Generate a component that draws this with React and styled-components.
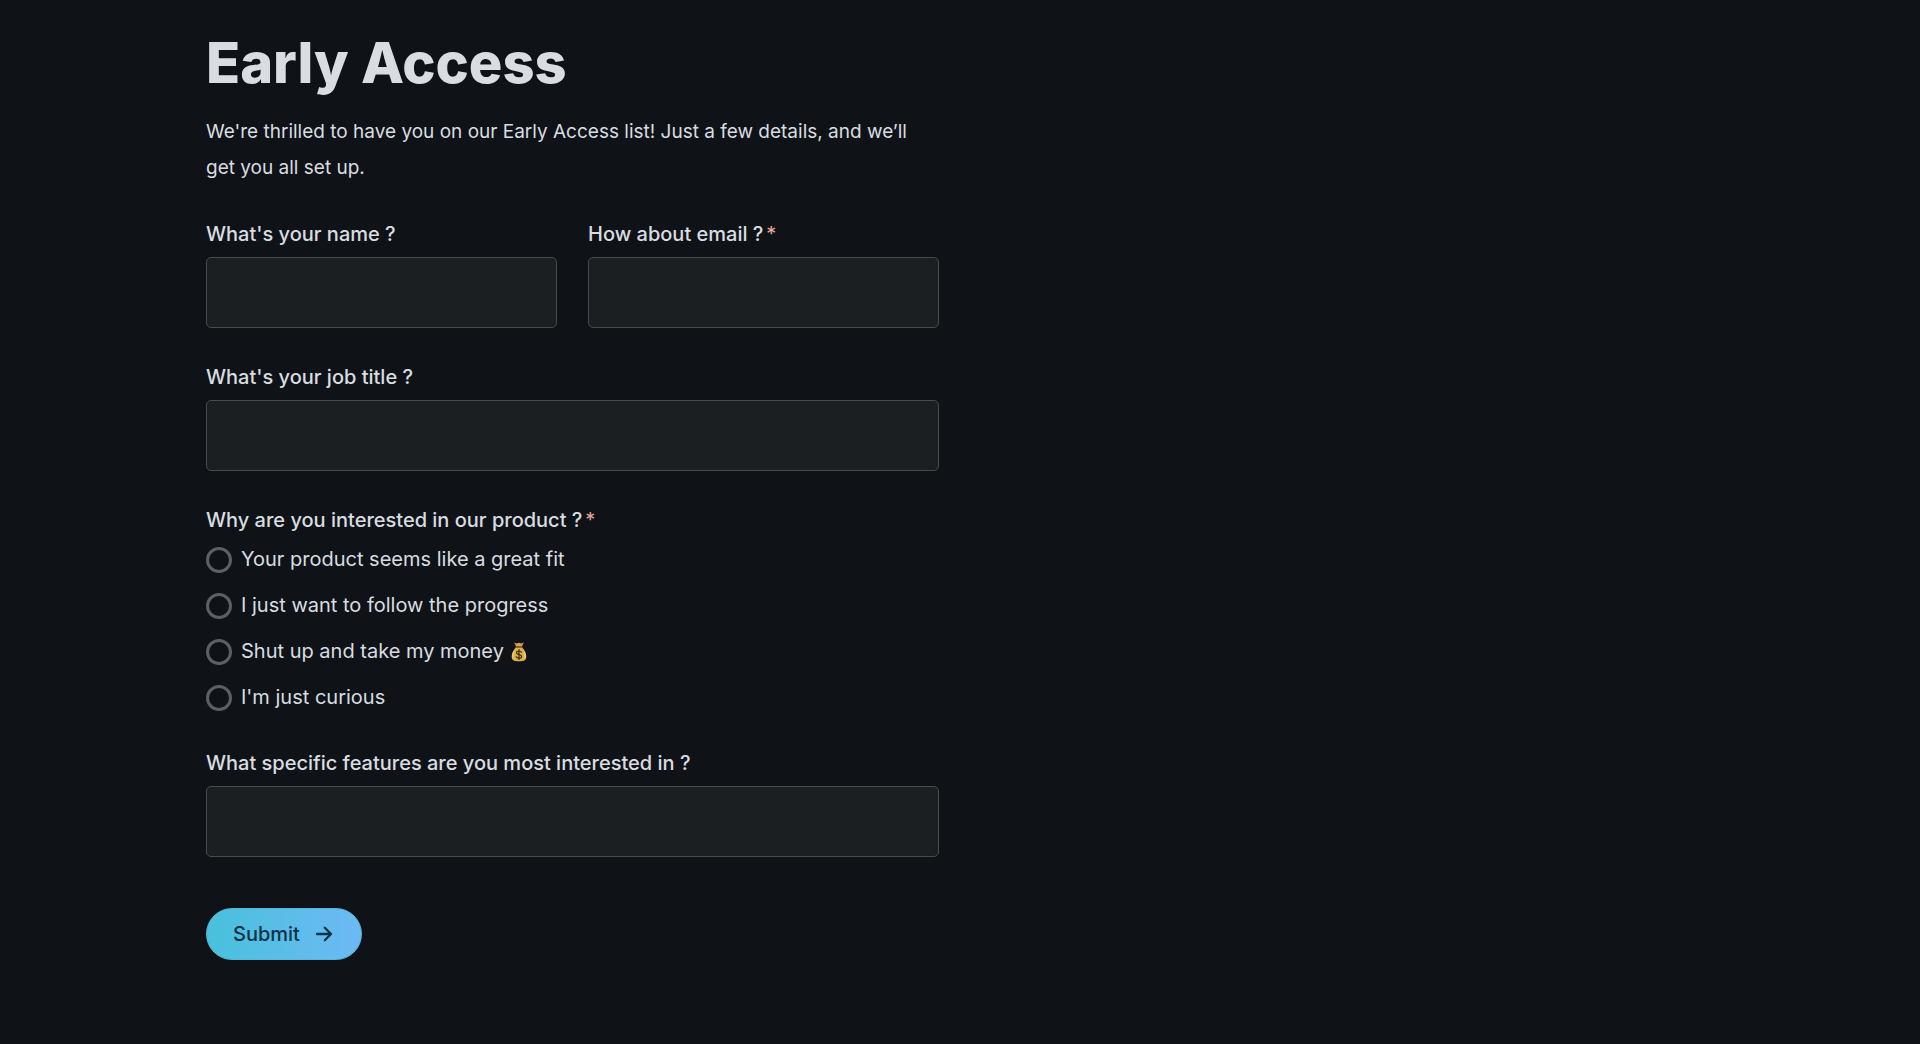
import React, { useState } from 'react'
import styled, { createGlobalStyle } from 'styled-components'

const GlobalStyle = createGlobalStyle`
  * {
    box-sizing: border-box;
  }

  body {
    margin: 0;
    background: #0f1317;
    color: #d9dde1;
    font-family: Inter, "Liberation Sans", sans-serif;
    font-size: 20px;
  }
`

const reasons = [
  { value: 'fit', text: 'Your product seems like a great fit' },
  { value: 'progress', text: 'I just want to follow the progress' },
  { value: 'money', text: 'Shut up and take my money', icon: true },
  { value: 'curious', text: "I'm just curious" },
]

function MoneyBag() {
  return (
    <BagIcon viewBox="0 0 16 20" role="img" aria-label="money bag">
      <path d="M3.2 0.6 5.6 1.5 8 0.8 10.4 1.5 12.8 0.6 10.8 4.6H5.2Z" fill="#d3a552" />
      <path d="M5.2 5.2h5.6c2.4 2.1 4.5 5.4 4.5 9 0 3.8-1.6 5-7.3 5s-7.3-1.2-7.3-5c0-3.6 2.1-6.9 4.5-9Z" fill="#dcb14c" />
      <path d="M3.2 9.4c-1.3 2.2-1.7 4.6-1.3 6.8M13 10c1.1 2.1 1.3 4.2.8 6.2" stroke="#f6dc86" strokeWidth="1" fill="none" />
      <path d="M5 5h6" stroke="#8a5a22" strokeWidth="1.3" strokeLinecap="round" />
      <path
        d="M10.5 10.3c-.4-.9-1.3-1.3-2.5-1.3-1.5 0-2.5.7-2.5 1.8 0 2.5 5.1 1.1 5.1 3.6 0 1.2-1.1 1.8-2.6 1.8-1.4 0-2.3-.5-2.7-1.4M8 7.7v9.8"
        stroke="#3a2a12"
        strokeWidth="1.2"
        fill="none"
        strokeLinecap="round"
      />
    </BagIcon>
  )
}

function Field({ id, label, type = 'text', required }) {
  return (
    <FieldWrap>
      <Label htmlFor={id}>
        {label}
        {required && <Star>*</Star>}
      </Label>
      <Input id={id} name={id} type={type} required={required} />
    </FieldWrap>
  )
}

function App() {
  const [reason, setReason] = useState('')

  return (
    <Page>
      <GlobalStyle />
      <Title>Early Access</Title>
      <Intro>
        We're thrilled to have you on our Early Access list! Just a few details, and we’ll get you all set up.
      </Intro>

      <Form onSubmit={(e) => e.preventDefault()}>
        <Row>
          <Field id="name" label="What's your name ?" />
          <Field id="email" label="How about email ?" type="email" required />
        </Row>

        <Field id="job" label="What's your job title ?" />

        <Group>
          <Legend>
            Why are you interested in our product ?<Star>*</Star>
          </Legend>
          <Options>
            {reasons.map((r) => (
              <Option key={r.value}>
                <Radio
                  type="radio"
                  name="reason"
                  value={r.value}
                  checked={reason === r.value}
                  onChange={() => setReason(r.value)}
                />
                <span>{r.text}</span>
                {r.icon && <MoneyBag />}
              </Option>
            ))}
          </Options>
        </Group>

        <Field id="features" label="What specific features are you most interested in ?" />

        <Submit type="submit">
          Submit
          <Arrow viewBox="0 0 18 18" aria-hidden="true">
            <path d="M2 9h14M9.8 2.8 16 9l-6.2 6.2" />
          </Arrow>
        </Submit>
      </Form>
    </Page>
  )
}

const Page = styled.main`
  max-width: 939px;
  padding: 30px 0 84px 206px;

  @media (max-width: 1000px) {
    padding: 30px 24px;
  }
`

const Title = styled.h1`
  margin: 0;
  font-size: 56px;
  line-height: 66px;
  font-weight: 800;
`

const Intro = styled.p`
  margin: 18px 0 33px;
  font-size: 19px;
  line-height: 36px;
`

const Form = styled.form`
  display: flex;
  flex-direction: column;
  gap: 34px;
`

const Row = styled.div`
  display: grid;
  grid-template-columns: 1fr 1fr;
  gap: 31px;

  @media (max-width: 600px) {
    grid-template-columns: 1fr;
  }
`

const FieldWrap = styled.div`
  display: flex;
  flex-direction: column;
  gap: 8px;
`

const Label = styled.label`
  line-height: 30px;
  font-weight: 450;
`

const Star = styled.span`
  margin-left: 3px;
  font-weight: 400;
  line-height: 1;
  color: #e8a79b;
`

const Input = styled.input`
  width: 100%;
  height: 71px;
  padding: 0 20px;
  border: 1px solid #464b4d;
  border-radius: 5px;
  background: #1b1f22;
  color: inherit;
  font: inherit;

  &:focus {
    outline: none;
    border-color: #5bc3e0;
  }
`

const Group = styled.fieldset`
  margin: 0;
  padding: 0;
  border: 0;
  min-width: 0;
`

const Legend = styled.legend`
  padding: 0;
  line-height: 30px;
  font-weight: 450;
`

const Options = styled.div`
  display: flex;
  flex-direction: column;
  align-items: flex-start;
  gap: 13px;
  padding-top: 8px;
`

const Option = styled.label`
  display: flex;
  align-items: center;
  line-height: 33px;
  cursor: pointer;
`

const Radio = styled.input`
  appearance: none;
  flex: none;
  width: 26px;
  height: 26px;
  margin: 0 9px 0 0;
  border: 3px solid #5c6064;
  border-radius: 50%;

  &:checked {
    border-color: #5bc3e0;
    background: radial-gradient(#5bc3e0 0 6px, transparent 7px);
  }
`

const BagIcon = styled.svg`
  width: 16px;
  height: 20px;
  margin-left: 7px;
`

const Submit = styled.button`
  display: flex;
  align-items: center;
  align-self: flex-start;
  gap: 15px;
  height: 52px;
  margin-top: 17px;
  padding: 0 28px 0 26px;
  border: 1px solid #56b9d8;
  border-radius: 26px;
  background: linear-gradient(90deg, #48c1dc, #6db9f5) border-box;
  color: #0b3346;
  font: inherit;
  font-weight: 450;
  cursor: pointer;
`

const Arrow = styled.svg`
  width: 18px;
  height: 18px;
  fill: none;
  stroke: currentColor;
  stroke-width: 2.3;
  stroke-linecap: round;
  stroke-linejoin: round;
`

export default App
